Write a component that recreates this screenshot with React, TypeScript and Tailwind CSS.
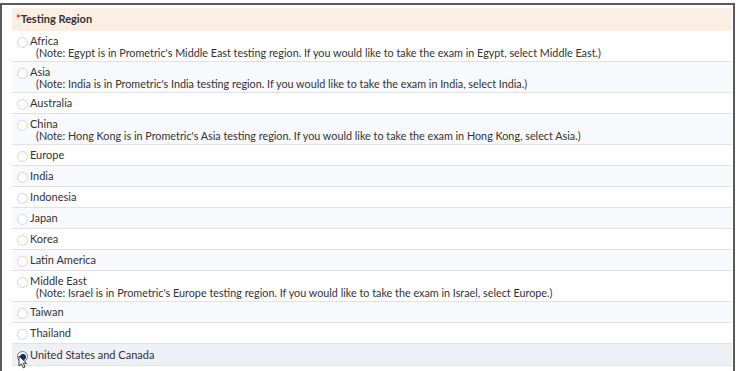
import React from "react";

type Item = { label: string; note?: string };

const items: Item[] = [
  { label: "Africa", note: "(Note: Egypt is in Prometric's Middle East testing region. If you would like to take the exam in Egypt, select Middle East.)" },
  { label: "Asia", note: "(Note: India is in Prometric's India testing region. If you would like to take the exam in India, select India.)" },
  { label: "Australia" },
  { label: "China", note: "(Note: Hong Kong is in Prometric's Asia testing region. If you would like to take the exam in Hong Kong, select Asia.)" },
  { label: "Europe" },
  { label: "India" },
  { label: "Indonesia" },
  { label: "Japan" },
  { label: "Korea" },
  { label: "Latin America" },
  { label: "Middle East", note: "(Note: Israel is in Prometric's Europe testing region. If you would like to take the exam in Israel, select Europe.)" },
  { label: "Taiwan" },
  { label: "Thailand" },
  { label: "United States and Canada" },
];

function Radio({ checked }: { checked?: boolean }) {
  return (
    <span
      className={
        checked
          ? "mt-[2px] flex h-[11px] w-[11px] shrink-0 items-center justify-center rounded-full border border-[#4a7bd0] bg-white"
          : "mt-[2px] h-[11px] w-[11px] shrink-0 rounded-full border border-[#d6d6d6] bg-white"
      }
    >
      {checked && <span className="h-[6px] w-[6px] rounded-full bg-[#1d2a4a]" />}
    </span>
  );
}

export default function App() {
  return (
    <div
      className="h-[371px] w-[738px] overflow-hidden bg-white pt-[3px] text-[#333]"
      style={{ fontFamily: "Lato, 'Open Sans', sans-serif" }}
    >
      <div className="h-[368px] w-[735px] border-l-2 border-r-2 border-t-2 border-[#5a5a5a] pl-[10px] pr-[1px] pt-[3px]">
        <div className="flex h-[23px] items-center bg-[#fbefe3] pl-[4px] text-[11px] font-bold text-[#333]">
          <span className="text-[#d0312d]">*</span>
          <span>Testing Region</span>
        </div>
        {items.map((it, i) => {
          const last = i === items.length - 1;
          const bg = last ? "bg-[#eef0f6]" : i % 2 === 1 ? "bg-[#f8f9fc]" : "bg-white";
          return (
            <div
              key={it.label}
              className={`relative flex gap-[2px] border-b border-[#e2e2e2] pl-[5px] ${bg} ${it.note ? "h-[31px] pt-[4px]" : last ? "h-[22px] pt-[5px]" : "h-[21px] pt-[4px]"}`}
            >
              <Radio checked={last} />
              <div className="text-[11px] leading-[12px]">
                <div>{it.label}</div>
                {it.note && <div className="pl-[6px] text-[10.8px] leading-[11px]">{it.note}</div>}
              </div>
              {last && (
                <svg className="absolute left-[6px] top-[11px]" width="10" height="14" viewBox="0 0 10 14">
                  <path d="M1 1 L1 11 L3.5 8.8 L5.3 12.8 L7 12 L5.3 8.2 L8.5 8.2 Z" fill="white" stroke="#222" strokeWidth="0.9" strokeLinejoin="round" />
                </svg>
              )}
            </div>
          );
        })}
      </div>
    </div>
  );
}
